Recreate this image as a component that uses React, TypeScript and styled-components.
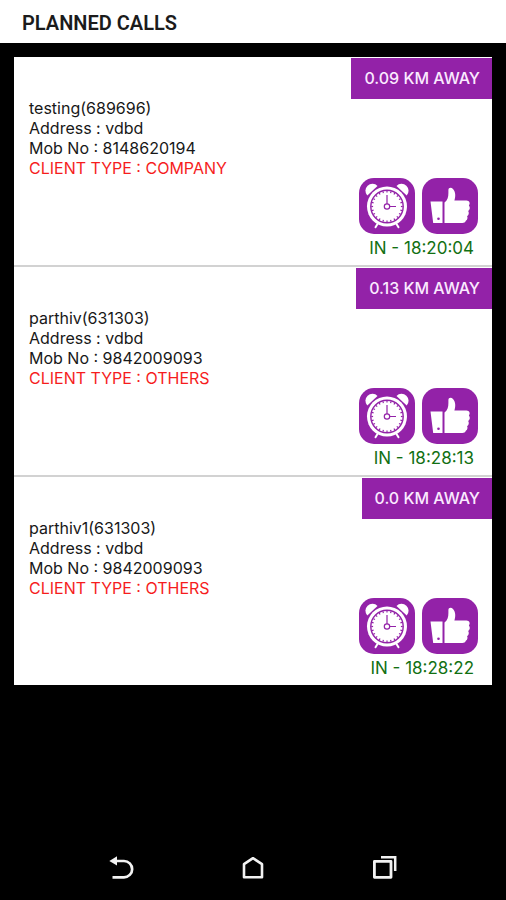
import React from "react";
import styled, { createGlobalStyle } from "styled-components";

const PURPLE = "#9322a8";

const GlobalStyle = createGlobalStyle`
  * { box-sizing: border-box; }
  body { margin: 0; background: #000; }
`;

const Screen = styled.div`
  min-height: 100vh;
  display: flex;
  flex-direction: column;
  background: #000;
  font-family: Inter, "DejaVu Sans", sans-serif;
`;

const Header = styled.header`
  display: flex;
  align-items: center;
  height: 43px;
  padding: 2px 22px 0;
  background: #fff;
`;

const Title = styled.h1`
  margin: 0;
  font-family: Roboto, sans-serif;
  font-size: 20px;
  line-height: 24px;
  font-weight: 600;
  color: #1b1b1b;
`;

const Main = styled.main`
  flex: 1;
  padding: 14px;
`;

const CallList = styled.ul`
  margin: 0;
  padding: 0;
  list-style: none;
  background: #fff;
`;

const CallItem = styled.li`
  display: flex;
  justify-content: space-between;
  min-height: 210px;
  border-bottom: 2px solid #d2d2d2;

  &:last-child {
    min-height: 208px;
    border-bottom: 0;
  }
`;

const Details = styled.div`
  padding: 41px 0 0 15px;
  font-size: 16px;
  line-height: 20px;
  color: #181818;
`;

const Line = styled.p<{ $accent?: boolean }>`
  margin: 0;
  color: ${(p) => (p.$accent ? "#f61d1d" : "inherit")};
`;

const Side = styled.div`
  display: flex;
  flex-direction: column;
  align-items: flex-end;
  justify-content: space-between;
  padding: 1px 0 7px;
`;

const Distance = styled.div`
  padding: 0 12px 0 13px;
  background: ${PURPLE};
  color: #fbeaff;
  font-size: 16px;
  line-height: 41px;
  font-weight: 500;
  white-space: nowrap;
`;

const Actions = styled.div`
  display: flex;
  flex-direction: column;
  align-items: flex-end;
  padding-right: 14px;
`;

const ButtonRow = styled.div`
  display: flex;
  gap: 7px;
`;

const ActionButton = styled.button`
  display: block;
  width: 56px;
  height: 56px;
  padding: 0;
  border: 0;
  border-radius: 15px;
  background: ${PURPLE};
  cursor: pointer;

  svg { display: block; }
`;

const CheckIn = styled.p`
  margin: 4px 4px 0 0;
  font-size: 17px;
  line-height: 20px;
  color: #127012;
`;

const NavBar = styled.nav`
  display: flex;
  justify-content: center;
  padding: 8px 0;
`;

const NavButton = styled.button`
  display: flex;
  align-items: center;
  justify-content: center;
  width: 26%;
  height: 50px;
  padding: 0;
  border: 0;
  background: transparent;
  cursor: pointer;
`;

const ticks = Array.from({ length: 24 }, (_, i) => i * 15);

const ClockIcon = () => (
  <svg width="56" height="56" viewBox="0 0 56 56" fill="none" aria-hidden="true">
    <path d="M8.3 17.5a5.8 5.8 0 1 1 10.2-9.5z" fill="#fff" />
    <path d="M47.7 17.5a5.8 5.8 0 1 0-10.2-9.5z" fill="#fff" />
    <path d="M18.5 46l-2 3.2M37.5 46l2 3.2" stroke="#fff" strokeWidth="2" strokeLinecap="round" />
    <circle cx="28" cy="28.5" r="20" fill="#fff" />
    <circle cx="28" cy="28.5" r="16.2" stroke={PURPLE} strokeWidth="1.4" />
    {ticks.map((a) => (
      <path key={a} d="M28 12.8v1.8" stroke={PURPLE} strokeWidth="1.2" transform={`rotate(${a} 28 28.5)`} />
    ))}
    <circle cx="28" cy="28.5" r="2.7" stroke={PURPLE} strokeWidth="1.2" />
    <path d="M28 26V17M30.7 28.5H37" stroke={PURPLE} strokeWidth="1.2" />
  </svg>
);

const ThumbIcon = () => (
  <svg width="56" height="56" viewBox="0 0 56 56" aria-hidden="true">
    <path d="M8.5 23.5H20.5V45H11.2z" fill="#fff" />
    <circle cx="16.5" cy="40.7" r="1.3" fill={PURPLE} />
    <path
      fill="#fff"
      d="M22.5 24.5C25.5 22.5 26.4 19 26.4 15V12.2C26.4 9.5 29.2 9 31 11C33.8 14 33.7 18.5 32.4 22.6H44.5C47.4 22.6 48.6 25.5 46.9 27.5C48.4 29.2 48 31.8 46.2 33C47.4 35 46.7 37.2 45.1 38.2C46 40 45.2 41.8 44 42.6C43.2 44.4 42 45 40.4 45H22.5Z"
    />
  </svg>
);

const BackIcon = () => (
  <svg width="26" height="26" viewBox="0 0 26 26" fill="none" aria-hidden="true">
    <path d="M7 7h9a8 8 0 0 1 0 16.3H4.5" stroke="#f2f2f2" strokeWidth="2.7" />
    <path d="M1.3 7L9 2.2v9.4z" fill="#f2f2f2" />
  </svg>
);

const HomeIcon = () => (
  <svg width="26" height="26" viewBox="0 0 26 26" fill="none" aria-hidden="true">
    <path d="M4 10.2L13 4.2l9 6V23.2H4z" stroke="#f2f2f2" strokeWidth="2.6" strokeLinejoin="round" />
  </svg>
);

const RecentsIcon = () => (
  <svg width="26" height="26" viewBox="0 0 26 26" fill="none" aria-hidden="true">
    <path d="M2.4 7.4H19V23.3H2.4z" stroke="#f2f2f2" strokeWidth="2.8" strokeLinejoin="round" />
    <path d="M9 3.2h14.2V17" stroke="#f2f2f2" strokeWidth="2.5" />
  </svg>
);

const calls = [
  { name: "testing(689696)", address: "vdbd", mobile: "8148620194", type: "COMPANY", distance: "0.09", time: "18:20:04" },
  { name: "parthiv(631303)", address: "vdbd", mobile: "9842009093", type: "OTHERS", distance: "0.13", time: "18:28:13" },
  { name: "parthiv1(631303)", address: "vdbd", mobile: "9842009093", type: "OTHERS", distance: "0.0", time: "18:28:22" },
];

export default function App() {
  return (
    <Screen>
      <GlobalStyle />
      <Header>
        <Title>PLANNED CALLS</Title>
      </Header>
      <Main>
        <CallList>
          {calls.map((call) => (
            <CallItem key={call.name}>
              <Details>
                <Line>{call.name}</Line>
                <Line>{`Address : ${call.address}`}</Line>
                <Line>{`Mob No : ${call.mobile}`}</Line>
                <Line $accent>{`CLIENT TYPE : ${call.type}`}</Line>
              </Details>
              <Side>
                <Distance>{`${call.distance} KM AWAY`}</Distance>
                <Actions>
                  <ButtonRow>
                    <ActionButton type="button" aria-label="Set reminder">
                      <ClockIcon />
                    </ActionButton>
                    <ActionButton type="button" aria-label="Approve">
                      <ThumbIcon />
                    </ActionButton>
                  </ButtonRow>
                  <CheckIn>{`IN - ${call.time}`}</CheckIn>
                </Actions>
              </Side>
            </CallItem>
          ))}
        </CallList>
      </Main>
      <NavBar>
        <NavButton type="button" aria-label="Back">
          <BackIcon />
        </NavButton>
        <NavButton type="button" aria-label="Home">
          <HomeIcon />
        </NavButton>
        <NavButton type="button" aria-label="Recent apps">
          <RecentsIcon />
        </NavButton>
      </NavBar>
    </Screen>
  );
}
